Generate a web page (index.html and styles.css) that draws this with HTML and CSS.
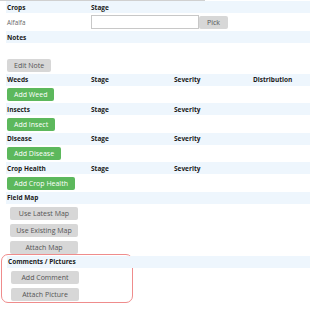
FILE: index.html
```html
<!DOCTYPE html>
<html>
<head>
<meta charset="utf-8">
<link rel="stylesheet" href="styles.css">
</head>
<body>
<div class="topline"></div>
<div class="page">
  <div class="hdr"><span class="c1">Crops</span><span class="c2">Stage</span></div>
  <div class="crop-row">
    <span class="c1 val">Alfalfa</span>
    <input class="stage-input" type="text">
    <button class="btn gray pick">Pick</button>
  </div>
  <div class="hdr"><span class="c1">Notes</span></div>
  <div class="notes-space"></div>
  <div class="btnrow"><button class="btn gray">Edit Note</button></div>

  <div class="hdr"><span class="c1">Weeds</span><span class="c2">Stage</span><span class="c3">Severity</span><span class="c4">Distribution</span></div>
  <div class="btnrow"><button class="btn green">Add Weed</button></div>

  <div class="hdr"><span class="c1">Insects</span><span class="c2">Stage</span><span class="c3">Severity</span></div>
  <div class="btnrow"><button class="btn green">Add Insect</button></div>

  <div class="hdr"><span class="c1">Disease</span><span class="c2">Stage</span><span class="c3">Severity</span></div>
  <div class="btnrow"><button class="btn green">Add Disease</button></div>

  <div class="hdr"><span class="c1">Crop Health</span><span class="c2">Stage</span><span class="c3">Severity</span></div>
  <div class="btnrow"><button class="btn green">Add Crop Health</button></div>

  <div class="hdr"><span class="c1">Field Map</span></div>
  <div class="btnrow ind"><button class="btn gray wide">Use Latest Map</button></div>
  <div class="btnrow ind"><button class="btn gray wide">Use Existing Map</button></div>
  <div class="btnrow ind"><button class="btn gray wide">Attach Map</button></div>

  <div class="highlight">
    <div class="hdr"><span class="c1">Comments / Pictures</span></div>
    <div class="btnrow ind"><button class="btn gray wide">Add Comment</button></div>
    <div class="btnrow ind"><button class="btn gray wide">Attach Picture</button></div>
  </div>
</div>
</body>
</html>
```
FILE: styles.css
```css
html, body {
  margin: 0;
  padding: 0;
  background: #fff;
}
body {
  font-family: "Open Sans", "Noto Sans", sans-serif;
  font-size: 6.5px;
  color: #222;
  width: 310px;
  height: 310px;
  overflow: hidden;
}
.topline {
  width: 205px;
  height: 1px;
  background: #d0d0d0;
}
.page {
  padding-left: 6px;
}
.hdr {
  display: flex;
  align-items: center;
  height: 12px;
  background: #eef6fd;
  font-weight: 700;
  color: #1a1a1a;
}
.c1 { width: 84px; padding-left: 1px; }
.c2 { width: 83px; }
.c3 { width: 79px; }
.c4 { }
.crop-row {
  display: flex;
  align-items: center;
  height: 18px;
}
.val {
  color: #666;
  font-size: 6.3px;
}
.stage-input {
  box-sizing: border-box;
  width: 108px;
  height: 14px;
  margin: 0;
  border: 1px solid #c8c8c8;
  background: #fff;
  padding: 0;
}
.pick {
  margin-left: 5px;
  width: 29px;
}
.notes-space {
  height: 13px;
}
.btnrow {
  display: flex;
  padding: 2.5px 0 2px 1px;
}
.btnrow.ind {
  padding-left: 4px;
  padding-top: 3px;
  padding-bottom: 1px;
}
.btn {
  box-sizing: border-box;
  height: 13px;
  margin: 0;
  border: none;
  border-radius: 2px;
  font-family: "Open Sans", "Noto Sans", sans-serif;
  font-size: 7px;
  padding: 0 7px;
  line-height: 13px;
  cursor: pointer;
}
.gray {
  background: #d7d7d7;
  color: #555;
}
.green {
  background: #5cb85c;
  color: #fff;
}
.wide {
  width: 68px;
  padding: 0;
}
.pick {
  padding: 0;
}
.highlight {
  margin-left: -5px;
  margin-top: -1px;
  width: 125px;
  border: 1px solid #ef8c8c;
  border-radius: 7px;
  padding: 1px 0 0 5px;
  overflow: visible;
}
.highlight .hdr {
  width: 304px;
}
```
